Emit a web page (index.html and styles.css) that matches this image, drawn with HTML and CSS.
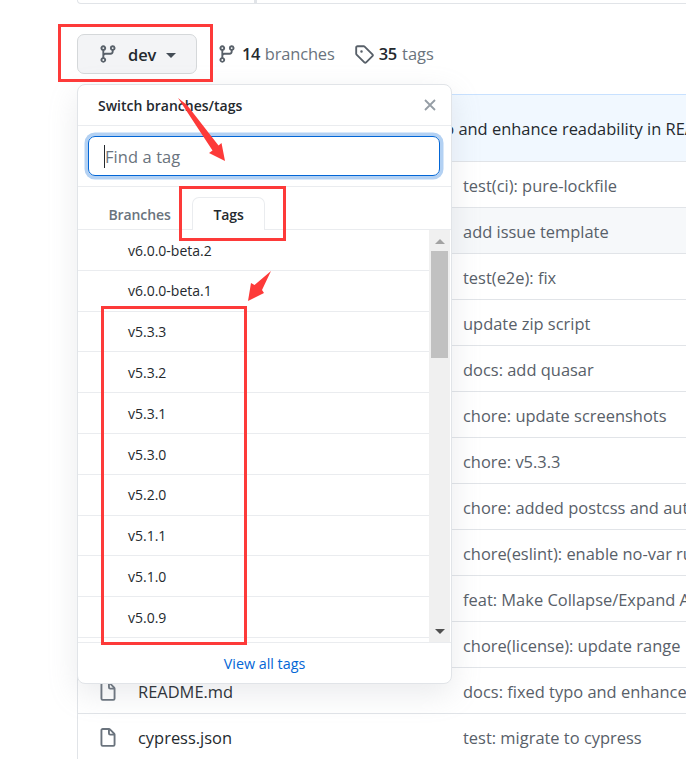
FILE: index.html
```html
<!DOCTYPE html>
<html lang="en">
<head>
<meta charset="utf-8">
<title>Switch branches/tags</title>
<link rel="stylesheet" href="styles.css">
</head>
<body>
<svg class="defs" width="0" height="0">
  <symbol id="branch" viewBox="0 0 16 16"><path fill-rule="evenodd" d="M11.75 2.5a.75.75 0 100 1.5.75.75 0 000-1.5zm-2.25.75a2.25 2.25 0 113 2.122V6A2.5 2.5 0 0110 8.5H6a1 1 0 00-1 1v1.128a2.251 2.251 0 11-1.5 0V5.372a2.25 2.25 0 111.5 0v1.836A2.492 2.492 0 016 7h4a1 1 0 001-1v-.628A2.25 2.25 0 019.5 3.25zM4.25 12a.75.75 0 100 1.5.75.75 0 000-1.5zM3.5 3.25a.75.75 0 111.5 0 .75.75 0 01-1.5 0z"/></symbol>
  <symbol id="tag" viewBox="0 0 16 16"><path fill-rule="evenodd" d="M2.5 7.775V2.75a.25.25 0 01.25-.25h5.025a.25.25 0 01.177.073l6.25 6.25a.25.25 0 010 .354l-5.025 5.025a.25.25 0 01-.354 0l-6.25-6.25a.25.25 0 01-.073-.177zm-1.5 0V2.75C1 1.784 1.784 1 2.75 1h5.025c.464 0 .91.184 1.238.513l6.25 6.25a1.75 1.75 0 010 2.474l-5.026 5.026a1.75 1.75 0 01-2.474 0l-6.25-6.25A1.75 1.75 0 011 7.775zM6 5a1 1 0 100 2 1 1 0 000-2z"/></symbol>
  <symbol id="file" viewBox="0 0 16 16"><path fill-rule="evenodd" d="M3.75 1.5a.25.25 0 00-.25.25v11.5c0 .138.112.25.25.25h8.5a.25.25 0 00.25-.25V6H9.75A1.75 1.75 0 018 4.25V1.5H3.75zm5.75.56v2.19c0 .138.112.25.25.25h2.19L9.5 2.06zM2 1.75C2 .784 2.784 0 3.75 0h5.086c.464 0 .909.184 1.237.513l3.414 3.414c.329.328.513.773.513 1.237v8.086A1.75 1.75 0 0112.25 15h-8.5A1.75 1.75 0 012 13.25V1.75z"/></symbol>
</svg>
<main class="page">
  <div class="notice"><span class="notice-divider"></span></div>
  <div class="toolbar">
    <button class="ref-button"><svg class="icon"><use href="#branch"/></svg><b>dev</b><i class="caret"></i></button>
    <a class="stat stat-branches"><svg class="icon"><use href="#branch"/></svg><b>14</b><span>branches</span></a>
    <a class="stat stat-tags"><svg class="icon"><use href="#tag"/></svg><b>35</b><span>tags</span></a>
  </div>
  <section class="files">
    <div class="commit">docs: fixed typo and enhance readability in README</div>
    <div class="row"><span></span><span class="msg">test(ci): pure-lockfile</span></div>
    <div class="row hover"><span></span><span class="msg">add issue template</span></div>
    <div class="row"><span></span><span class="msg">test(e2e): fix</span></div>
    <div class="row"><span></span><span class="msg">update zip script</span></div>
    <div class="row"><span></span><span class="msg">docs: add quasar</span></div>
    <div class="row"><span></span><span class="msg">chore: update screenshots</span></div>
    <div class="row"><span></span><span class="msg">chore: v5.3.3</span></div>
    <div class="row"><span></span><span class="msg">chore: added postcss and autoprefixer</span></div>
    <div class="row"><span></span><span class="msg">chore(eslint): enable no-var rule</span></div>
    <div class="row"><span></span><span class="msg">feat: Make Collapse/Expand All</span></div>
    <div class="row"><span></span><span class="msg">chore(license): update range</span></div>
    <div class="row"><span class="name"><svg class="icon"><use href="#file"/></svg><span class="readme">README.md</span></span><span class="msg">docs: fixed typo and enhance readability</span></div>
    <div class="row"><span class="name"><svg class="icon"><use href="#file"/></svg><span>cypress.json</span></span><span class="msg">test: migrate to cypress</span></div>
  </section>

  <section class="popover">
    <header class="pop-head"><span>Switch branches/tags</span>
      <svg class="close" viewBox="0 0 12 12"><path d="M1 1l10 10M11 1L1 11"/></svg></header>
    <div class="search"><div class="field"><i class="cursor"></i><span>Find a tag</span></div></div>
    <nav class="tabs"><span class="tab">Branches</span><span class="tab active">Tags</span></nav>
    <div class="list">
      <ul class="tags">
        <li>v6.0.0-beta.2</li><li>v6.0.0-beta.1</li><li>v5.3.3</li><li>v5.3.2</li><li>v5.3.1</li><li>v5.3.0</li><li>v5.2.0</li><li>v5.1.1</li><li>v5.1.0</li><li>v5.0.9</li>
      </ul>
      <div class="scrollbar"><i class="up"></i><i class="thumb"></i><i class="down"></i></div>
    </div>
    <footer class="pop-foot">View all tags</footer>
  </section>

  <svg class="marks" width="686" height="759" viewBox="0 0 686 759">
    <g class="frames"><path d="M59.5 25.500h152v55h-152zM180.500 187.500h104v52h-104zM102.500 307.500h143v336h-143z"/></g>
    <path class="arrow" d="M178 98L187 105L218.500 145.500L221.500 143L225 161L209 153L212.500 150.500ZM271 271L262 290L264 293L248 301L251 283L254.500 285Z"/>
  </svg>
</main>
</body>
</html>
```
FILE: styles.css
```css
* { box-sizing: border-box; }
body { margin: 0; background: #fff; color: #24292e; font: 16.45px/24px "Open Sans", "Noto Sans", sans-serif; }
.defs { position: absolute; }
.page { position: relative; width: 686px; height: 759px; overflow: hidden; }
.icon { width: 20px; height: 20px; flex: none; fill: #586069; }
b { font-weight: 600; color: #24292e; }

.notice { height: 4px; margin-left: 77px; width: 640px; border: 1px solid #e1e4e8; border-top: 0; border-radius: 0 0 0 7px; }
.notice-divider { display: block; width: 3px; height: 4px; margin-left: 176px; background: #e1e4e8; }
.toolbar { display: flex; align-items: flex-start; height: 90px; padding: 30px 0 0 77px; }
.ref-button { display: flex; align-items: center; width: 120px; height: 40px; padding: 0 0 0 20px; border: 1px solid #d5d8da; border-radius: 7px; background: #f3f4f6; font: inherit; line-height: 24px; }
.ref-button b { margin: 1px 0 0 10px; letter-spacing: -.1px; }
.ref-button .caret { margin: 3px 0 0 10px; border: 5px solid transparent; border-top-color: #444d56; border-bottom: 0; }
.stat { display: flex; align-items: center; height: 40px; color: #6a737d; }
.stat b { margin: 0 5px 0 5px; letter-spacing: -.5px; }
.stat-branches { margin-left: 20px; }
.stat-branches span { letter-spacing: -.15px; }
.stat-tags { margin-left: 19px; }
.stat-tags b { letter-spacing: -.2px; }

.files { width: 900px; margin-left: 77px; border: 1px solid #e1e4e8; border-top: 0; border-bottom: 0; white-space: nowrap; }
.commit { height: 67px; padding: 22px 0 0 256px; background: #f1f8ff; border-top: 1px solid #c8e1ff; color: #24292e; }
.row { display: grid; grid-template-columns: 385px 1fr; align-items: center; height: 46px; border-top: 1px solid #e1e4e8; padding-top: 2px; }
.row.hover { background: #f6f8fa; }
.name { display: flex; align-items: center; gap: 20px; padding-left: 20px; }
.name .icon { fill: #6a737d; }
.msg { color: #586069; }

.popover { position: absolute; left: 77px; top: 84px; width: 375px; height: 600px; display: flex; flex-direction: column; border: 1px solid #e1e4e8; border-radius: 8px; background: #fff; box-shadow: 0 10px 30px rgba(149,157,165,.2); overflow: hidden; }
.pop-head { display: flex; align-items: center; justify-content: space-between; height: 41px; flex: none; padding: 0 15px 0 20px; border-bottom: 1px solid #eaecef; font-size: 14px; font-weight: 600; }
.pop-head span { padding-top: 2px; }
.close { width: 12px; height: 12px; fill: none; stroke: #959da5; stroke-width: 1.8; }
.search { height: 61px; flex: none; padding: 10px 11px 10px 10px; border-bottom: 1px solid #eaecef; }
.field { display: flex; align-items: center; height: 40px; padding-left: 15px; border: 1px solid #0366d6; border-radius: 7px; box-shadow: 0 0 0 3.5px #b3d1f3; color: #6a737d; }
.field span { padding-top: 2px; letter-spacing: .1px; }
.cursor { width: 1px; height: 23px; background: #24292e; }
.tabs { display: flex; align-items: flex-end; height: 43px; flex: none; padding-left: 9px; box-shadow: inset 0 -1px #eaecef; font-size: 14px; font-weight: 600; }
.tab { width: 105px; height: 33px; padding-top: 6px; text-align: center; color: #6a737d; letter-spacing: -.1px; }
.tab.active { width: 73px; border: 1px solid #eaecef; border-bottom: 0; border-radius: 7px 7px 0 0; background: #fff; color: #24292e; padding-top: 5px; }
.list { display: flex; height: 413px; flex: none; border-bottom: 1px solid #eaecef; overflow: hidden; }
.tags { flex: 1; margin: 0; padding: 0; list-style: none; font-size: 14px; }
.tags li { height: 40.8px; padding: 8.6px 0 0 50px; border-bottom: 1px solid #eaecef; }
.scrollbar { display: flex; flex-direction: column; align-items: center; width: 21px; margin-right: 1px; background: #f0f0f0; }
.up { margin-top: 9px; border: 5px solid transparent; border-bottom-color: #a3a3a3; border-top: 0; }
.thumb { width: 17px; height: 107px; margin-top: 7px; background: #c1c1c1; }
.down { margin: auto 0 8px; border: 5px solid transparent; border-top-color: #505050; border-bottom: 0; }
.pop-foot { height: 41px; padding-top: 9px; text-align: center; color: #0366d6; font-size: 14.3px; }
.marks { position: absolute; left: 0; top: 0; }
.frames { fill: none; stroke: #fd3a39; stroke-width: 3; }
.arrow { fill: #fd3a39; }
```
